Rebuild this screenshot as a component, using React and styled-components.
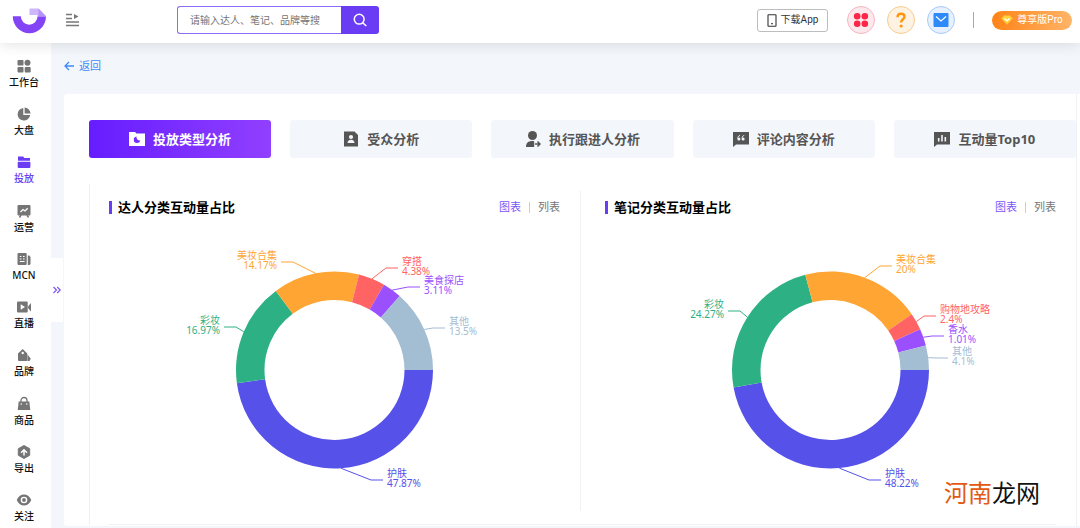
import React, { useState } from "react";
import styled, { createGlobalStyle, ThemeProvider } from "styled-components";

const theme = {
  primary: "#6a3df5",
  link: "#3e8bf8",
  background: "#f3f6fa",
  white: "#ffffff",
  black: "#111111",
  grey: "#757575",
  dark: "#555555",
  line: "#eff1f4",
};

const GlobalStyle = createGlobalStyle`
  *, *::before, *::after {
    box-sizing: border-box;
  }
  body {
    margin: 0;
    background: #ffffff;
    font-family: "Noto Sans", "Noto Sans CJK SC", sans-serif;
    font-size: 10px;
    line-height: 16px;
  }
  button, input {
    font-family: inherit;
    font-size: inherit;
    line-height: inherit;
    padding: 0;
    margin: 0;
    border: none;
    background: none;
  }
  button {
    cursor: pointer;
  }
  a {
    text-decoration: none;
  }
  svg {
    display: block;
    flex-shrink: 0;
  }
`;

const StyledPage = styled.div`
  min-height: 100vh;
  display: flex;
  flex-direction: column;
`;

/* header */

const StyledHeader = styled.header`
  position: relative;
  z-index: 2;
  display: flex;
  align-items: center;
  height: 43px;
  padding: 0 8px 3px 12px;
  background-color: ${({ theme }) => theme.white};
  box-shadow: 0 0 16px rgba(0, 0, 0, 0.14);
`;

const StyledMenuButton = styled.button`
  margin-left: 18px;
`;

const StyledSearch = styled.form`
  display: flex;
  width: 202px;
  height: 28px;
  margin-left: 98px;
`;

const StyledInput = styled.input`
  flex: 1;
  min-width: 0;
  padding: 0 12px;
  border: 1px solid #8d6cf7;
  border-right: none;
  border-radius: 3px 0 0 3px;
  color: ${({ theme }) => theme.black};
  outline: none;
  &::placeholder {
    color: ${({ theme }) => theme.grey};
    opacity: 1;
  }
`;

const StyledSearchButton = styled.button`
  display: flex;
  align-items: center;
  justify-content: center;
  width: 38px;
  border-radius: 0 3px 3px 0;
  background-color: ${({ theme }) => theme.primary};
`;

const StyledActions = styled.div`
  display: flex;
  align-items: center;
  margin-left: auto;
`;

const StyledDownload = styled.button`
  display: flex;
  align-items: center;
  justify-content: center;
  gap: 4px;
  width: 71px;
  height: 23px;
  border: 1px solid #bdbdbd;
  border-radius: 3px;
  color: #333333;
  font-family: Roboto, "Noto Sans CJK SC", sans-serif;
`;

const StyledCircles = styled.div`
  display: flex;
  gap: 12px;
  margin-left: 19px;
`;

const StyledCircle = styled.button`
  display: flex;
  align-items: center;
  justify-content: center;
  width: 28px;
  height: 28px;
  border-radius: 50%;
  border: 1px solid ${({ $border }) => $border};
  background-color: ${({ $fill }) => $fill};
`;

const StyledSeparator = styled.span`
  width: 1px;
  height: ${({ $height }) => $height}px;
  margin: 0 ${({ $space }) => $space}px;
  background-color: ${({ $color }) => $color};
`;

const StyledPro = styled.button`
  display: flex;
  align-items: center;
  justify-content: center;
  gap: 4px;
  width: 80px;
  height: 19px;
  border-radius: 10px;
  background-image: linear-gradient(90deg, #ff8317, #ffb468);
  color: ${({ theme }) => theme.white};
  font-family: Roboto, "Noto Sans CJK SC", sans-serif;
`;

/* sidebar */

const StyledBody = styled.div`
  flex: 1;
  display: flex;
`;

const StyledSidebar = styled.aside`
  position: relative;
  display: flex;
  width: 51px;
  flex-shrink: 0;
  background-color: ${({ theme }) => theme.white};
`;

const StyledNav = styled.nav`
  flex: 1;
  display: flex;
  flex-direction: column;
  justify-content: space-between;
  padding: 15px 3px 4px 0;
`;

const StyledNavLink = styled.a`
  display: flex;
  flex-direction: column;
  align-items: center;
  color: ${({ theme, $active }) => ($active ? theme.primary : theme.black)};
  font-weight: 500;
  svg {
    color: ${({ theme, $active }) => ($active ? theme.primary : theme.grey)};
  }
`;

const StyledExpand = styled.button`
  position: absolute;
  top: 215px;
  left: 100%;
  display: flex;
  align-items: center;
  justify-content: center;
  width: 12px;
  height: 64px;
  background-color: ${({ theme }) => theme.white};
`;

/* content */

const StyledMain = styled.main`
  flex: 1;
  min-width: 0;
  padding: 0 0 2px 13px;
  background-color: ${({ theme }) => theme.background};
`;

const StyledBackRow = styled.div`
  display: flex;
  align-items: center;
  height: 51px;
  padding-bottom: 6px;
`;

const StyledBack = styled.a`
  display: flex;
  align-items: center;
  gap: 5px;
  color: ${({ theme }) => theme.link};
  font-size: 11px;
`;

const StyledCard = styled.div`
  padding-right: 3px;
  border-radius: 3px 0 0 3px;
  background-color: ${({ theme }) => theme.white};
`;

const StyledCardBody = styled.div`
  padding: 26px 0 1px 25px;
  border-right: 1px solid ${({ theme }) => theme.line};
`;

const StyledTabs = styled.div`
  display: grid;
  grid-template-columns: repeat(5, 1fr);
  gap: 19px;
`;

const StyledTab = styled.button`
  display: flex;
  align-items: center;
  justify-content: center;
  gap: 8px;
  height: 38px;
  border-radius: 3px;
  font-size: 13px;
  font-weight: 700;
  white-space: nowrap;
  color: ${({ theme, $active }) => ($active ? theme.white : theme.dark)};
  background: ${({ theme, $active }) =>
    $active ? "linear-gradient(90deg, #661dff, #913fff)" : theme.background};
`;

const StyledPanel = styled.div`
  margin-top: 26px;
  padding-top: 7px;
  border-left: 1px solid ${({ theme }) => theme.line};
`;

const StyledCharts = styled.div`
  display: flex;
  padding-bottom: 13px;
`;

/* content-box keeps both charts equally wide whatever their padding is */
const StyledSection = styled.section`
  box-sizing: content-box;
  flex: 1 1 0;
  min-width: 0;
  padding: 0 20px 0 24px;
  &:first-child {
    padding-left: 19px;
    border-right: 1px solid ${({ theme }) => theme.line};
  }
`;

const StyledSectionHeader = styled.div`
  display: flex;
  align-items: center;
  justify-content: space-between;
  height: 32px;
`;

const StyledTitle = styled.h2`
  display: flex;
  align-items: center;
  gap: 6px;
  margin: 0;
  color: #000000;
  font-size: 13px;
  font-weight: 700;
  &::before {
    content: "";
    width: 3px;
    height: 13px;
    background-color: ${({ theme }) => theme.primary};
  }
`;

const StyledSwitch = styled.div`
  display: flex;
  align-items: center;
`;

const StyledSwitchButton = styled.button`
  font-size: 11px;
  color: ${({ theme, $active }) => ($active ? "#7d55f7" : theme.grey)};
`;

const StyledChart = styled.svg`
  width: 100%;
  height: 288px;
  font-size: 10px;
`;

const StyledDivider = styled.hr`
  height: 1px;
  margin: 0 20px 0 19px;
  border: none;
  background-color: ${({ theme }) => theme.line};
`;

const StyledWatermark = styled.div`
  position: absolute;
  z-index: 3;
  top: 474px;
  right: 40px;
  font-size: 24px;
  line-height: 36px;
  font-family: "Noto Sans CJK SC", sans-serif;
  font-weight: 400;
  color: ${({ theme }) => theme.black};
  span {
    color: #e25a12;
  }
`;

/* icons */

const Icon = ({ size = 16, children }) => (
  <svg width={size} height={size} viewBox="0 0 16 16" fill="currentColor" aria-hidden="true">
    {children}
  </svg>
);

const Logo = () => (
  <svg width="35" height="27" viewBox="0 0 35 27" role="img" aria-label="logo">
    <path d="M.8 9.3h8a8.400 8.400 0 0 0 16.800 0H34a16.600 17 0 0 1-33.200 0z" fill="#8344f5" />
    <path d="M17.500 1.500h9L34 9.300h-8.400l-.6-1.300h-7.500z" fill="#cdb6fb" />
    <path d="M26.500 1.500 34 9.300h-7.500z" fill="#b592f8" />
  </svg>
);

const navItems = [
  {
    name: "工作台",
    icon: (
      <>
        <rect x="1.5" y="2" width="6" height="5.5" rx="1" />
        <circle cx="11.5" cy="4.8" r="3" />
        <rect x="1.5" y="9" width="6" height="5.5" rx="1" />
        <rect x="8.7" y="9" width="6" height="5.5" rx="1" />
      </>
    ),
  },
  {
    name: "大盘",
    icon: (
      <>
        <path d="M7.3 2a6.300 6.300 0 1 0 6.900 7H7.300z" />
        <path d="M8.6 1.600v6h6a6.300 6.300 0 0 0-6-6z" />
      </>
    ),
  },
  {
    name: "投放",
    icon: (
      <>
        <path d="M2 2.500h5l1.500 1.600h5.500v2.700H2z" />
        <rect x="1.7" y="7.8" width="12.7" height="6.2" rx="1" />
      </>
    ),
  },
  {
    name: "运营",
    icon: (
      <>
        <rect x="1.5" y="2" width="13" height="10.5" rx="1" />
        <path d="M5 12 3.500 14.500M11 12l1.500 2.500" stroke="currentColor" strokeWidth="1.5" />
        <path d="m4.500 9 2.500-2.500 2 1.500 2.700-2.700" fill="none" stroke="#fff" strokeWidth="1.3" />
      </>
    ),
  },
  {
    name: "MCN",
    icon: (
      <>
        <rect x="1.5" y="2" width="9.2" height="12" rx="1" />
        <path d="M11.800 4.500h1.500l1.200 1.500V13l-1 1h-1.700z" />
        <path d="M3.800 5.500h1.600M7 5.500h1.600M3.800 8h1.600M7 8h1.600M3.800 10.500h4.800" stroke="#fff" strokeWidth="1.2" />
      </>
    ),
  },
  {
    name: "直播",
    icon: (
      <>
        <rect x="1" y="2.5" width="10.7" height="11" rx="1" />
        <path d="m12 7.500 3-3.500v8.500l-3-3.500z" />
        <path d="M4.700 5.300v5.400L9 8z" fill="#fff" />
      </>
    ),
  },
  {
    name: "品牌",
    icon: (
      <>
        <path d="M2 6.500 6.700 2l4.600 4.500V13a1 1 0 0 1-1 1H3a1 1 0 0 1-1-1z" />
        <path d="M11.500 14V7.500l3.300 4.300-1.300 2.200z" />
        <circle cx="6.7" cy="6" r="1.2" fill="#fff" />
      </>
    ),
  },
  {
    name: "商品",
    icon: (
      <>
        <path d="M2.700 5.500h10.600l1 8.500H1.700z" />
        <path d="M5 6V4.500a3 3 0 0 1 6 0V6" fill="none" stroke="currentColor" strokeWidth="1.3" />
        <circle cx="5.3" cy="8" r="0.8" fill="#fff" />
        <circle cx="10.7" cy="8" r="0.8" fill="#fff" />
      </>
    ),
  },
  {
    name: "导出",
    icon: (
      <>
        <path d="m8 1.500 5.700 3.200v6.600L8 14.500l-5.700-3.200V4.700z" stroke="currentColor" strokeLinejoin="round" />
        <path d="M8 11.500V6M5 8.700l3-3 3 3" fill="none" stroke="#fff" strokeWidth="1.5" />
      </>
    ),
  },
  {
    name: "关注",
    icon: (
      <>
        <path d="M.7 8C2.500 4.200 5 2.500 8 2.500S13.500 4.200 15.300 8c-1.800 3.800-4.300 5.500-7.300 5.500S2.500 11.800.7 8z" />
        <circle cx="8" cy="8" r="2.6" fill="none" stroke="#fff" strokeWidth="1.4" />
      </>
    ),
  },
];

const tabs = [
  {
    name: "投放类型分析",
    icon: (
      <>
        <path d="M0 1h6l1.500 1.500H16V15H0z" />
        <path d="M7.500 5.500a3.300 3.300 0 1 0 3.800 4A3.400 3.400 0 0 1 7.500 5.500z" fill="#7a2cff" />
      </>
    ),
  },
  {
    name: "受众分析",
    icon: (
      <>
        <path d="M1 .5h10.500L15 4v11.500H1z" />
        <circle cx="8" cy="6" r="2.1" fill="#f3f6fa" />
        <path d="M4.500 12c0-2 1.200-3.300 3.500-3.300s3.500 1.300 3.500 3.300z" fill="#f3f6fa" />
      </>
    ),
  },
  {
    name: "执行跟进人分析",
    icon: (
      <>
        <circle cx="7.5" cy="4.5" r="4.5" />
        <path d="M1 16c0-4 2-6 6.500-6 .8 0 1.300.2 1.700.4V16z" />
        <path d="M10 13h4.500M12.500 10.500 15 13l-2.500 2.500" fill="none" stroke="currentColor" strokeWidth="1.5" />
      </>
    ),
  },
  {
    name: "评论内容分析",
    icon: (
      <>
        <path d="M0 1h16v12.500H3L0 16z" />
        <path
          d="M7 4.500c-1.500.3-2.200 1.300-2.200 2.800M11.200 4.500C9.700 4.800 9 5.800 9 7.300"
          fill="none"
          stroke="#f3f6fa"
        />
        <circle cx="5.9" cy="8" r="1.5" fill="#f3f6fa" />
        <circle cx="10.1" cy="8" r="1.5" fill="#f3f6fa" />
      </>
    ),
  },
  {
    name: "互动量Top10",
    icon: (
      <>
        <path d="M0 1h16v12.500H3L0 16z" />
        <path d="M4.700 7v3.500M8 4v6.500M11.300 6v4.500" stroke="#f3f6fa" strokeWidth="1.6" />
      </>
    ),
  },
];

const colors = {
  blue: "#5651e8",
  green: "#2db084",
  orange: "#ffa533",
  red: "#ff6363",
  purple: "#9b50ff",
  grey: "#a3bdd3",
};

const charts = [
  {
    title: "达人分类互动量占比",
    data: [
      { name: "护肤", value: 47.87, color: colors.blue, elbow: [262, 257] },
      { name: "彩妆", value: 16.97, color: colors.green, elbow: [127, 104] },
      { name: "美妆合集", value: 14.17, color: colors.orange, elbow: [184, 39] },
      { name: "穿搭", value: 4.38, color: colors.red, elbow: [277, 45] },
      { name: "美食探店", value: 3.11, color: colors.purple, elbow: [299, 64] },
      { name: "其他", value: 13.5, color: colors.grey, elbow: [324, 105] },
    ],
  },
  {
    title: "笔记分类互动量占比",
    data: [
      { name: "护肤", value: 48.22, color: colors.blue, elbow: [264, 257] },
      { name: "彩妆", value: 24.27, color: colors.green, elbow: [135, 88] },
      { name: "美妆合集", value: 20, color: colors.orange, elbow: [275, 43] },
      { name: "购物地攻略", value: 2.4, color: colors.red, elbow: [319, 93] },
      { name: "香水", value: 1.01, color: colors.purple, elbow: [327, 113] },
      { name: "其他", value: 4.1, color: colors.grey, elbow: [331, 135] },
    ],
  },
];

const CENTER = [225.5, 147];
const OUTER = 98.5;
const INNER = 70;
const MIN_ANGLE = 10;

const point = (angle, radius) => {
  const rad = (angle * Math.PI) / 180;
  return [CENTER[0] + radius * Math.cos(rad), CENTER[1] + radius * Math.sin(rad)];
};

// small slices are widened to MIN_ANGLE, the others share what is left
const getSlices = (data) => {
  const isSmall = ({ value }) => value * 3.6 < MIN_ANGLE;
  const big = data.filter((item) => !isSmall(item));
  const rest = 360 - (data.length - big.length) * MIN_ANGLE;
  const total = big.reduce((sum, item) => sum + item.value, 0);
  let start = 0;
  return data.map((item) => {
    const angle = isSmall(item) ? MIN_ANGLE : (item.value / total) * rest;
    const slice = { ...item, start, end: start + angle };
    start += angle;
    return slice;
  });
};

const Donut = ({ title, data }) => (
  <StyledChart viewBox="0 0 451 288" role="img" aria-label={title}>
    {getSlices(data).map(({ name, value, color, elbow, start, end }) => {
      const large = end - start > 180 ? 1 : 0;
      const [x, y] = elbow;
      const side = x < CENTER[0] ? -1 : 1;
      const anchor = side < 0 ? "end" : "start";
      const textX = x + side * 16;
      return (
        <g key={name} fill={color}>
          <path
            d={`M${point(start, OUTER)} A${OUTER} ${OUTER} 0 ${large} 1 ${point(end, OUTER)}
            L${point(end, INNER)} A${INNER} ${INNER} 0 ${large} 0 ${point(start, INNER)}Z`}
          />
          <polyline
            points={`${point((start + end) / 2, OUTER)} ${x},${y} ${x + side * 12},${y}`}
            fill="none"
            stroke={color}
          />
          <text x={textX} y={y - 3} textAnchor={anchor}>
            {name}
          </text>
          <text x={textX} y={y + 7} textAnchor={anchor}>
            {value}%
          </text>
        </g>
      );
    })}
  </StyledChart>
);

const ChartSection = ({ title, data }) => {
  const [view, setView] = useState("图表");
  return (
    <StyledSection>
      <StyledSectionHeader>
        <StyledTitle>{title}</StyledTitle>
        <StyledSwitch>
          <StyledSwitchButton $active={view === "图表"} onClick={() => setView("图表")}>
            图表
          </StyledSwitchButton>
          <StyledSeparator $height={11} $space={8} $color="#cccccc" />
          <StyledSwitchButton $active={view === "列表"} onClick={() => setView("列表")}>
            列表
          </StyledSwitchButton>
        </StyledSwitch>
      </StyledSectionHeader>
      <Donut title={title} data={data} />
    </StyledSection>
  );
};

const Header = () => (
  <StyledHeader>
    <Logo />
    <StyledMenuButton aria-label="菜单">
      <svg width="14" height="14" viewBox="0 0 14 14" fill="none" stroke="#777">
        <path d="M1 1.500h6M1 5.500h6M1 9h13M1 12.500h13" strokeWidth="1.3" />
        <path d="M9 1v5l4.500-2.500z" fill="#777" stroke="none" />
      </svg>
    </StyledMenuButton>
    <StyledSearch onSubmit={(e) => e.preventDefault()}>
      <StyledInput aria-label="搜索" placeholder="请输入达人、笔记、品牌等搜" />
      <StyledSearchButton aria-label="搜索">
        <svg width="14" height="14" viewBox="0 0 14 14" fill="none" stroke="#fff" strokeWidth="1.5">
          <circle cx="6.2" cy="6.2" r="4.9" />
          <path d="m9.700 9.700 3.600 3.300" />
        </svg>
      </StyledSearchButton>
    </StyledSearch>
    <StyledActions>
      <StyledDownload>
        <svg width="10" height="13" viewBox="0 0 10 13" fill="none" stroke="#333">
          <rect x="1" y="0.8" width="8" height="11.4" rx="0.5" strokeWidth="1.1" />
          <path d="M4.200 9.700h1.600" strokeWidth="1.3" />
        </svg>
        下载App
      </StyledDownload>
      <StyledCircles>
        <StyledCircle $border="#fbb4c1" $fill="#fde8ec" aria-label="应用">
          <svg width="16" height="16" viewBox="0 0 16 16" fill="#fb2547">
            <circle cx="4.2" cy="4.2" r="3.3" />
            <circle cx="11.8" cy="4.2" r="3.3" />
            <circle cx="4.2" cy="11.8" r="3.3" />
            <circle cx="11.8" cy="11.8" r="3.3" />
          </svg>
        </StyledCircle>
        <StyledCircle $border="#fbcb8e" $fill="#fef2e3" aria-label="帮助">
          <svg width="16" height="16" viewBox="0 0 16 16" fill="none" stroke="#ff960d" strokeWidth="2.4">
            <path d="M4.500 5.300C4.500 2.500 6 1.700 8 1.700s3.500 1 3.500 3c0 2.600-3.400 2.600-3.400 5.800" />
            <circle cx="8.1" cy="14" r="1.6" fill="#ff960d" stroke="none" />
          </svg>
        </StyledCircle>
        <StyledCircle $border="#a9cbfb" $fill="#e6f0fe" aria-label="消息">
          <svg width="16" height="16" viewBox="0 0 16 16">
            <rect x="0.5" y="1" width="15" height="14" rx="1" fill="#2e89fa" />
            <path d="m3 4.500 5 4.500 5-4.500" fill="none" stroke="#fff" strokeWidth="1.2" />
          </svg>
        </StyledCircle>
      </StyledCircles>
      <StyledSeparator $height={16} $space={18} $color="#aaaaaa" />
      <StyledPro>
        <svg width="12" height="10" viewBox="0 0 12 10">
          <path d="M3 0.500h6l2.700 3L6 9.500.3 3.500z" fill="#ffd23c" />
          <path d="m3.500 3.500 2.500 2.300 2.500-2.300" fill="none" stroke="#fff" strokeWidth="1.3" />
        </svg>
        尊享版Pro
      </StyledPro>
    </StyledActions>
  </StyledHeader>
);

const Sidebar = () => (
  <StyledSidebar>
    <StyledNav>
      {navItems.map(({ name, icon }) => (
        <StyledNavLink key={name} href="#" $active={name === "投放"}>
          <Icon>{icon}</Icon>
          {name}
        </StyledNavLink>
      ))}
    </StyledNav>
    <StyledExpand aria-label="展开">
      <svg width="8" height="8" viewBox="0 0 8 8" fill="none" stroke="#7d55f7" strokeWidth="1.2">
        <path d="m.5 1 3 3-3 3M4.200 1l3 3-3 3" />
      </svg>
    </StyledExpand>
  </StyledSidebar>
);

const App = () => {
  const [activeTab, setActiveTab] = useState(tabs[0].name);
  return (
    <ThemeProvider theme={theme}>
      <GlobalStyle />
      <StyledPage>
        <Header />
        <StyledBody>
          <Sidebar />
          <StyledMain>
            <StyledBackRow>
              <StyledBack href="#">
                <svg width="10" height="10" viewBox="0 0 10 10" fill="none" stroke="currentColor">
                  <path d="M10 5H1M5 1 1 5l4 4" strokeWidth="1.3" />
                </svg>
                返回
              </StyledBack>
            </StyledBackRow>
            <StyledCard>
              <StyledCardBody>
                <StyledTabs>
                  {tabs.map(({ name, icon }) => (
                    <StyledTab
                      key={name}
                      $active={name === activeTab}
                      onClick={() => setActiveTab(name)}
                    >
                      <Icon>{icon}</Icon>
                      {name}
                    </StyledTab>
                  ))}
                </StyledTabs>
                <StyledPanel>
                  <StyledCharts>
                    {charts.map((chart) => (
                      <ChartSection key={chart.title} {...chart} />
                    ))}
                  </StyledCharts>
                  <StyledDivider />
                </StyledPanel>
              </StyledCardBody>
            </StyledCard>
          </StyledMain>
        </StyledBody>
        <StyledWatermark>
          <span>河南</span>龙网
        </StyledWatermark>
      </StyledPage>
    </ThemeProvider>
  );
};

export default App;
